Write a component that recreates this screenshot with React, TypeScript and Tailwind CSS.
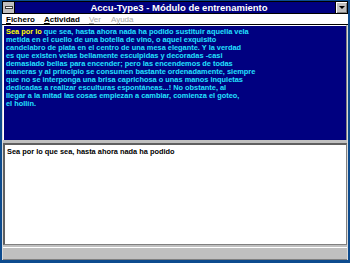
import React from "react";

export default function App() {
  const f = { fontFamily: '"Liberation Sans", Arial, sans-serif' };
  return (
    <div className="w-[350px] h-[263px] bg-[#0d4b8e] flex flex-col px-[2px] pt-[1px] pb-[3px] overflow-hidden" style={f}>
      {/* Title bar */}
      <div className="h-[13px] flex items-stretch bg-[#000080] border border-[#000000]">
        <div className="w-[12px] bg-[#c0c0c0] border-r border-black flex items-center justify-center">
          <div className="w-[8px] h-[3px] bg-white border border-[#404040]" />
        </div>
        <div className="flex-1 text-white font-bold text-[9.5px] leading-[11px] text-center pl-[8px]">
          Accu-Type3 - Módulo de entrenamiento
        </div>
        <div className="w-[12px] bg-[#c0c0c0] border-l border-black flex items-center justify-center shadow-[inset_1px_1px_0_#fff,inset_-1px_-1px_0_#808080]">
          <div className="w-0 h-0 border-l-[3px] border-r-[3px] border-t-[3px] border-l-transparent border-r-transparent border-t-black" />
        </div>
      </div>
      {/* Menu bar */}
      <div className="h-[11px] bg-white flex items-center text-[8px] font-bold leading-[11px] border-b border-black pl-[4px]">
        <span className="text-black"><span className="underline">F</span>ichero</span>
        <span className="text-black ml-[9px]"><span className="underline">A</span>ctividad</span>
        <span className="text-[#a8a8a8] ml-[9px] font-normal"><span className="underline">V</span>er</span>
        <span className="text-[#a8a8a8] ml-[10px] font-normal">A<span className="underline">y</span>uda</span>
      </div>
      {/* Client area */}
      <div className="flex-1 flex flex-col bg-[#c0c0c0] border-x border-[#dcdcdc]">
        <div className="h-[115px] bg-[#000080] border-l border-t border-white border-r border-r-[#808080] px-[2px] pt-[2px]">
          <p className="text-[7.4px] leading-[8px] font-bold text-[#22e0ff]">
            <span className="text-[#ffff00]">Sea por lo</span> que sea, hasta ahora nada ha podido sustituir aquella vela<br />
            metida en el cuello de una botella de vino, o aquel exquisito<br />
            candelabro de plata en el centro de una mesa elegante. Y la verdad<br />
            es que existen velas bellamente esculpidas y decoradas -casi<br />
            demasiado bellas para encender; pero las encendemos de todas<br />
            maneras y al principio se consumen bastante ordenadamente, siempre<br />
            que no se interponga una brisa caprichosa o unas manos inquietas<br />
            dedicadas a realizar esculturas espontáneas...! No obstante, al<br />
            llegar a la mitad las cosas empiezan a cambiar, comienza el goteo,<br />
            el hollín.
          </p>
        </div>
        <div className="h-[3px]" />
        <div className="h-[102px] bg-white border-t-2 border-l-2 border-t-[#606060] border-l-[#606060] border-r border-b border-r-[#808080] border-b-[#808080] px-[2px] pt-[3px]">
          <p className="text-[7.4px] leading-[8px] font-bold text-black">
            Sea por lo que sea, hasta ahora nada ha podido
          </p>
        </div>
        <div className="h-[2px]" />
        <div className="flex-1 border-t border-white border-b border-b-[#808080] bg-[#c0c0c0]" />
      </div>
    </div>
  );
}
